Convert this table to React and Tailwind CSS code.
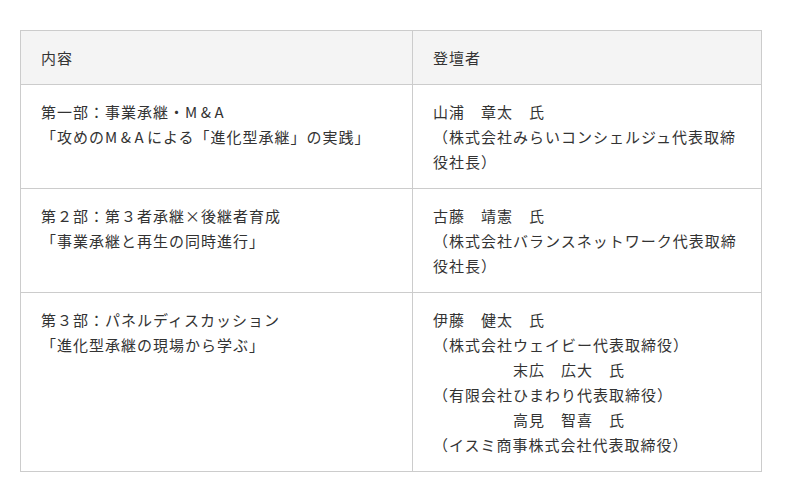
export default function App() {
  const font = { fontFamily: '"Noto Sans CJK JP", "Noto Sans", sans-serif' };
  const td = "border border-[#cccccc] px-5 py-[14px] align-top";
  return (
    <div className="bg-white w-[800px] h-[502px] pt-[30px] pl-[20px]" style={font}>
      <table className="border-collapse w-[741px] table-fixed text-[15px] leading-[25px] tracking-[1px] text-[#333333]">
        <colgroup>
          <col className="w-[392px]" />
          <col className="w-[349px]" />
        </colgroup>
        <thead>
          <tr className="bg-[#f4f4f4]">
            <th className={td + " text-left font-normal"}>内容</th>
            <th className={td + " text-left font-normal"}>登壇者</th>
          </tr>
        </thead>
        <tbody>
          <tr>
            <td className={td}>
              <div>第一部：事業承継・<span className="tracking-[3.5px]">M&amp;A</span></div>
              <div>「攻めの<span className="tracking-[3.5px]">M&amp;A</span>による「進化型承継」の実践」</div>
            </td>
            <td className={td}>
              <div>山浦　章太　氏</div>
              <div>（株式会社みらいコンシェルジュ代表取締役社長）</div>
            </td>
          </tr>
          <tr>
            <td className={td}>
              <div>第２部：第３者承継×後継者育成</div>
              <div>「事業承継と再生の同時進行」</div>
            </td>
            <td className={td}>
              <div>古藤　靖憲　氏</div>
              <div>（株式会社バランスネットワーク代表取締役社長）</div>
            </td>
          </tr>
          <tr>
            <td className={td}>
              <div>第３部：パネルディスカッション</div>
              <div>「進化型承継の現場から学ぶ」</div>
            </td>
            <td className={td + " whitespace-pre"}>
              <div>伊藤　健太　氏</div>
              <div>（株式会社ウェイビー代表取締役）</div>
              <div>　　　　　末広　広大　氏</div>
              <div>（有限会社ひまわり代表取締役）</div>
              <div>　　　　　高見　智喜　氏</div>
              <div>（イスミ商事株式会社代表取締役）</div>
            </td>
          </tr>
        </tbody>
      </table>
    </div>
  );
}
